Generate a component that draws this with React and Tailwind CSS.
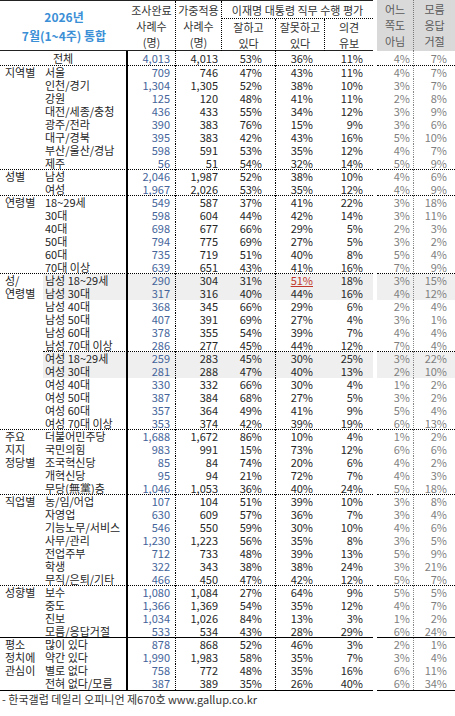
const sections = [
  {
    label: ['지역별'],
    groups: [[
      ['서울', '709', '746', '47%', '43%', '11%', '4%', '7%'],
      ['인천/경기', '1,304', '1,305', '52%', '38%', '10%', '3%', '7%'],
      ['강원', '125', '120', '48%', '41%', '11%', '2%', '8%'],
      ['대전/세종/충청', '436', '433', '55%', '34%', '12%', '3%', '9%'],
      ['광주/전라', '390', '383', '76%', '15%', '9%', '3%', '6%'],
      ['대구/경북', '395', '383', '42%', '43%', '16%', '5%', '10%'],
      ['부산/울산/경남', '598', '591', '53%', '35%', '12%', '4%', '7%'],
      ['제주', '56', '51', '54%', '32%', '14%', '5%', '9%'],
    ]],
  },
  {
    label: ['성별'],
    groups: [[
      ['남성', '2,046', '1,987', '52%', '38%', '10%', '4%', '6%'],
      ['여성', '1,967', '2,026', '53%', '35%', '12%', '4%', '9%'],
    ]],
  },
  {
    label: ['연령별'],
    groups: [[
      ['18~29세', '549', '587', '37%', '41%', '22%', '3%', '18%'],
      ['30대', '598', '604', '44%', '42%', '14%', '3%', '11%'],
      ['40대', '698', '677', '66%', '29%', '5%', '2%', '3%'],
      ['50대', '794', '775', '69%', '27%', '5%', '3%', '2%'],
      ['60대', '735', '719', '51%', '40%', '8%', '5%', '4%'],
      ['70대 이상', '639', '651', '43%', '41%', '16%', '7%', '9%'],
    ]],
  },
  {
    label: ['성/', '연령별'],
    shade: 2,
    groups: [
      [
        ['남성 18~29세', '290', '304', '31%', '51%', '18%', '3%', '15%'],
        ['남성 30대', '317', '316', '40%', '44%', '16%', '4%', '12%'],
        ['남성 40대', '368', '345', '66%', '29%', '6%', '2%', '4%'],
        ['남성 50대', '407', '391', '69%', '27%', '4%', '3%', '1%'],
        ['남성 60대', '378', '355', '54%', '39%', '7%', '4%', '4%'],
        ['남성 70대 이상', '286', '277', '45%', '44%', '12%', '7%', '4%'],
      ],
      [
        ['여성 18~29세', '259', '283', '45%', '30%', '25%', '3%', '22%'],
        ['여성 30대', '281', '288', '47%', '40%', '13%', '2%', '10%'],
        ['여성 40대', '330', '332', '66%', '30%', '4%', '1%', '2%'],
        ['여성 50대', '387', '384', '68%', '27%', '5%', '3%', '2%'],
        ['여성 60대', '357', '364', '49%', '41%', '9%', '5%', '4%'],
        ['여성 70대 이상', '353', '374', '42%', '39%', '19%', '6%', '13%'],
      ],
    ],
  },
  {
    label: ['주요', '지지', '정당별'],
    groups: [[
      ['더불어민주당', '1,688', '1,672', '86%', '10%', '4%', '1%', '2%'],
      ['국민의힘', '983', '991', '15%', '73%', '12%', '6%', '6%'],
      ['조국혁신당', '85', '84', '74%', '20%', '6%', '4%', '2%'],
      ['개혁신당', '95', '94', '21%', '72%', '7%', '4%', '3%'],
      ['무당(無黨)층', '1,046', '1,053', '36%', '40%', '24%', '5%', '18%'],
    ]],
  },
  {
    label: ['직업별'],
    groups: [[
      ['농/임/어업', '107', '104', '51%', '39%', '10%', '3%', '8%'],
      ['자영업', '630', '609', '57%', '36%', '7%', '3%', '4%'],
      ['기능노무/서비스', '546', '550', '59%', '30%', '10%', '4%', '6%'],
      ['사무/관리', '1,230', '1,223', '56%', '35%', '8%', '3%', '5%'],
      ['전업주부', '712', '733', '48%', '39%', '13%', '5%', '9%'],
      ['학생', '322', '343', '38%', '38%', '24%', '3%', '21%'],
      ['무직/은퇴/기타', '466', '450', '47%', '42%', '12%', '5%', '7%'],
    ]],
  },
  {
    label: ['성향별'],
    groups: [[
      ['보수', '1,080', '1,084', '27%', '64%', '9%', '5%', '5%'],
      ['중도', '1,366', '1,369', '54%', '35%', '12%', '4%', '7%'],
      ['진보', '1,034', '1,026', '84%', '13%', '3%', '1%', '2%'],
      ['모름/응답거절', '533', '534', '43%', '28%', '29%', '6%', '24%'],
    ]],
  },
  {
    label: ['평소', '정치에', '관심이'],
    last: true,
    groups: [[
      ['많이 있다', '878', '868', '52%', '46%', '3%', '2%', '1%'],
      ['약간 있다', '1,990', '1,983', '58%', '35%', '7%', '3%', '4%'],
      ['별로 없다', '758', '772', '48%', '35%', '16%', '6%', '11%'],
      ['전혀 없다/모름', '387', '389', '35%', '26%', '40%', '6%', '34%'],
    ]],
  },
];

function LeftRow({ row, shaded }) {
  const highlight = row[0] === '남성 18~29세';
  return (
    <div className={`grid grid-cols-[85px_48px_46px_54px_49px_48px] h-[13px] leading-[13px] ${shaded ? 'bg-[#efefef]' : ''}`}>
      <div className="pl-[2px] border-r-2 border-black whitespace-nowrap">{row[0]}</div>
      <div className="text-right pr-[5px] border-r border-dotted border-black text-[#44649a]">{row[1]}</div>
      <div className="text-right pr-[4px]">{row[2]}</div>
      <div className="text-right pr-[13px] border-r border-dotted border-black">{row[3]}</div>
      <div className="text-right pr-[12px]">
        {highlight ? <span className="text-[#c0392b] underline">{row[4]}</span> : row[4]}
      </div>
      <div className="text-right pr-[10px]">{row[5]}</div>
    </div>
  );
}

function RightRow({ row, shaded }) {
  return (
    <div className={`grid grid-cols-[37px_41px] h-[13px] leading-[13px] text-[#7f7f7f] ${shaded ? 'bg-[#efefef]' : ''}`}>
      <div className="text-right pr-[3px] border-r border-dotted border-[#888]">{row[6]}</div>
      <div className="text-right pr-[8px]">{row[7]}</div>
    </div>
  );
}

function Section({ s }) {
  const bottom = s.last ? 'border-b border-solid' : '';
  return (
    <div className="flex -mt-px">
      <div className={`w-[373px] flex border-t border-dotted border-black ${bottom}`}>
        <div className="w-[43px] pl-[5px]">
          {s.label.map((l) => (
            <div key={l} className="h-[13px] leading-[13px] whitespace-nowrap">{l}</div>
          ))}
        </div>
        <div className="flex-1">
          {s.groups.map((g, gi) => (
            <div key={gi} className={gi > 0 ? '-mt-px border-t border-dotted border-black' : ''}>
              {g.map((r, ri) => (
                <LeftRow key={r[0]} row={r} shaded={s.shade && ri < s.shade} />
              ))}
            </div>
          ))}
        </div>
      </div>
      <div className="w-[4px]" />
      <div className={`w-[78px] border-t border-dotted border-black ${bottom}`}>
        {s.groups.map((g, gi) => (
          <div key={gi} className={gi > 0 ? '-mt-px border-t border-dotted border-black' : ''}>
            {g.map((r, ri) => (
              <RightRow key={r[0]} row={r} shaded={s.shade && ri < s.shade} />
            ))}
          </div>
        ))}
      </div>
    </div>
  );
}

function Header() {
  return (
    <div className="flex h-[51px]">
      <div className="w-[373px] grid grid-cols-[128px_48px_46px_151px] border-t border-b border-[#222] text-[#333]">
        <div className="pt-[6px] text-center text-[12px] leading-[19px] font-bold text-[#3a8fd6]">
          <div>2026년</div>
          <div>7월(1~4주) 통합</div>
        </div>
        <div className="pt-[1px] text-center leading-[16px] border-r border-dotted border-black whitespace-nowrap">
          <div>조사완료</div>
          <div>사례수</div>
          <div>(명)</div>
        </div>
        <div className="pt-[1px] text-center leading-[16px] border-r border-dotted border-black whitespace-nowrap">
          <div>가중적용</div>
          <div>사례수</div>
          <div>(명)</div>
        </div>
        <div className="flex flex-col">
          <div className="h-[18px] pt-[1px] leading-[16px] text-center border-b border-dotted border-black whitespace-nowrap">
            이재명 대통령 직무 수행 평가
          </div>
          <div className="grid grid-cols-[54px_49px_48px] flex-1 leading-[16px] text-center">
            <div className="border-r border-dotted border-black">
              <div>잘하고</div>
              <div>있다</div>
            </div>
            <div className="border-r border-dotted border-black whitespace-nowrap">
              <div>잘못하고</div>
              <div>있다</div>
            </div>
            <div>
              <div>의견</div>
              <div>유보</div>
            </div>
          </div>
        </div>
      </div>
      <div className="w-[4px]" />
      <div className="w-[78px] grid grid-cols-[37px_41px] bg-[#d9d9d9] text-[#595959] leading-[16px] text-center">
        <div className="pt-[1px] border-r border-dotted border-[#777]">
          <div>어느</div>
          <div>쪽도</div>
          <div>아님</div>
        </div>
        <div className="pt-[1px]">
          <div>모름</div>
          <div>응답</div>
          <div>거절</div>
        </div>
      </div>
    </div>
  );
}

export default function App() {
  const total = ['전체', '4,013', '4,013', '53%', '36%', '11%', '4%', '7%'];
  return (
    <div className="w-[455px] h-[716px] bg-white text-[11px] text-[#262626] font-['Noto_Sans_CJK_KR','Noto_Sans',sans-serif] overflow-hidden">
      <Header />
      <div className="flex h-[15px] leading-[15px]">
        <div className="w-[373px] grid grid-cols-[128px_48px_46px_54px_49px_48px]">
          <div className="text-center border-r-2 border-black">{total[0]}</div>
          <div className="text-right pr-[5px] border-r border-dotted border-black text-[#44649a]">{total[1]}</div>
          <div className="text-right pr-[4px]">{total[2]}</div>
          <div className="text-right pr-[13px] border-r border-dotted border-black">{total[3]}</div>
          <div className="text-right pr-[12px]">{total[4]}</div>
          <div className="text-right pr-[10px]">{total[5]}</div>
        </div>
        <div className="w-[4px]" />
        <div className="w-[78px] grid grid-cols-[37px_41px] text-[#7f7f7f]">
          <div className="text-right pr-[3px] border-r border-dotted border-[#888]">{total[6]}</div>
          <div className="text-right pr-[8px]">{total[7]}</div>
        </div>
      </div>
      {sections.map((s) => (
        <Section key={s.label.join('')} s={s} />
      ))}
      <div className="pl-[2px] leading-[16px] text-[#333] whitespace-nowrap">
        - 한국갤럽 데일리 오피니언 제670호 www.gallup.co.kr
      </div>
    </div>
  );
}
